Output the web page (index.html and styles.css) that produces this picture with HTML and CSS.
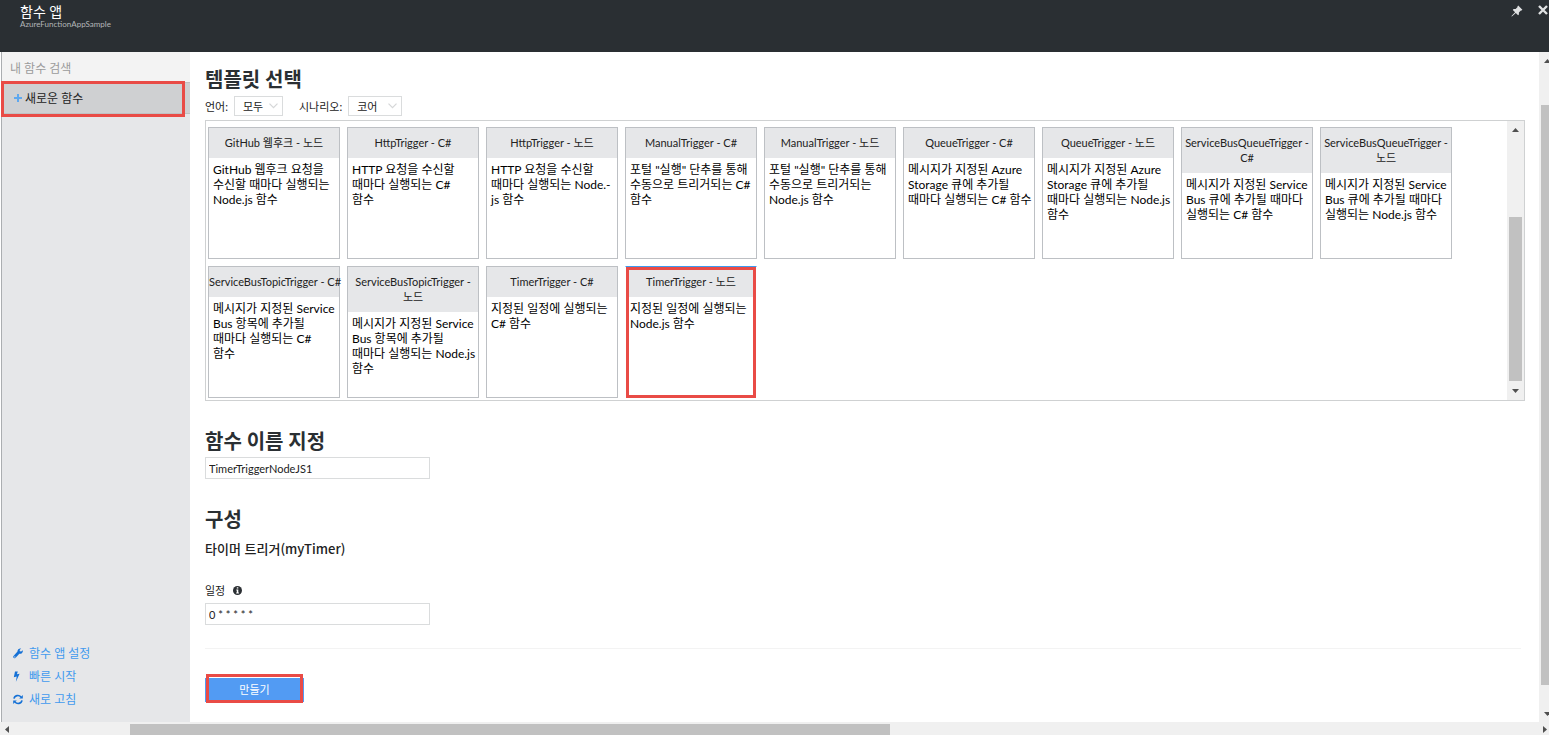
FILE: index.html
```html
<!DOCTYPE html>
<html lang="ko">
<head>
<meta charset="utf-8">
<title>함수 앱</title>
<link rel="stylesheet" href="styles.css">
</head>
<body>
<div class="page">
  <header class="topbar">
    <div class="titles">
      <h1 class="title">함수 앱</h1>
      <p class="subtitle">AzureFunctionAppSample</p>
    </div>
    <div class="actions">
      <button class="icon-button" aria-label="고정"><svg width="12" height="12" viewBox="0 0 12 12"><path fill="#dfe1e2" d="M7.2.6 11.4 4.8 10.6 5.6 9.9 5.4 7.9 7.4 7.9 9.4 7.1 10.2 4.8 7.9 1.2 11.3.4 11.6.7 10.8 4.1 7.2 1.8 4.9 2.6 4.1 4.6 4.1 6.6 2.1 6.4 1.4z"/></svg></button>
      <button class="icon-button" aria-label="닫기"><svg width="10" height="10" viewBox="0 0 10 10"><path stroke="#dfe1e2" stroke-width="2.4" d="M1 1 9 9M9 1 1 9"/></svg></button>
    </div>
  </header>
  <div class="body">
    <aside class="sidebar">
      <input class="search" type="text" placeholder="내 함수 검색" aria-label="내 함수 검색">
      <button class="new-function"><svg width="8" height="8" viewBox="0 0 8 8"><path stroke="#5fa8ee" stroke-width="2" d="M4 0V8M0 4H8"/></svg><span>새로운 함수</span></button>
      <nav class="links">
        <a href="#"><svg width="10" height="11" viewBox="0 0 10 11"><path fill="#1571d6" d="M9.8 2.3 8.2 3.6 6.9 3.2 6.6 2 8.2.6C6.300 0 4.300 1.400 4.500 3.600L.5 7.900C-.5 9.300 1 11 2.400 9.900L6.300 5.800C8.600 6.200 10.200 4.300 9.800 2.300ZM1.500 8.500a.6.6 0 1 1 .1 1.100.6.6 0 0 1-.1-1.100Z"/></svg><span>함수 앱 설정</span></a>
        <a href="#"><svg width="10" height="11" viewBox="0 0 10 11"><path fill="#1571d6" d="M2 .5H4.800L3.900 3.300 6.600 2.700 2.900 10.700 3.700 5.500.8 6.200Z"/></svg><span>빠른 시작</span></a>
        <a href="#"><svg width="10" height="11" viewBox="0 0 10 11"><path fill="none" stroke="#1571d6" stroke-width="1.600" d="M1 4.600C1.600 1.200 6 .6 8 3M9 6.400C8.400 9.800 4 10.400 2 8"/><path fill="#1571d6" d="M9.800.9V4.500H6.200ZM.2 10.100V6.500H3.800Z"/></svg><span>새로 고침</span></a>
      </nav>
      <span class="mark mark-new"></span>
    </aside>
    <main class="content">
      <h2 class="heading">템플릿 선택</h2>
      <div class="filters">
        <label for="lang">언어:</label>
        <span class="select-wrap"><select id="lang" class="select lang"><option>모두</option></select><svg class="chevron" width="9" height="6" viewBox="0 0 9 6"><path fill="none" stroke="#d5d7d8" stroke-width="1.200" d="M.5.7 4.500 4.700 8.500.7"/></svg></span>
        <label class="scenario-label" for="scenario">시나리오:</label>
        <span class="select-wrap"><select id="scenario" class="select scenario"><option>코어</option></select><svg class="chevron" width="9" height="6" viewBox="0 0 9 6"><path fill="none" stroke="#d5d7d8" stroke-width="1.200" d="M.5.7 4.500 4.700 8.500.7"/></svg></span>
      </div>
      <section class="templates">
        <div class="grid">
          <button class="card"><span class="name">GitHub 웹후크 - 노드</span><span class="desc">GitHub 웹후크 요청을<br>수신할 때마다 실행되는<br>Node.js 함수</span></button>
          <button class="card"><span class="name">HttpTrigger - C#</span><span class="desc">HTTP 요청을 수신할<br>때마다 실행되는 C#<br>함수</span></button>
          <button class="card"><span class="name">HttpTrigger - 노드</span><span class="desc">HTTP 요청을 수신할<br>때마다 실행되는 Node.-<br>js 함수</span></button>
          <button class="card"><span class="name">ManualTrigger - C#</span><span class="desc">포털 "실행" 단추를 통해<br>수동으로 트리거되는 C#<br>함수</span></button>
          <button class="card"><span class="name">ManualTrigger - 노드</span><span class="desc">포털 "실행" 단추를 통해<br>수동으로 트리거되는<br>Node.js 함수</span></button>
          <button class="card"><span class="name">QueueTrigger - C#</span><span class="desc">메시지가 지정된 Azure<br>Storage 큐에 추가될<br>때마다 실행되는 C# 함수</span></button>
          <button class="card"><span class="name">QueueTrigger - 노드</span><span class="desc">메시지가 지정된 Azure<br>Storage 큐에 추가될<br>때마다 실행되는 Node.js<br>함수</span></button>
          <button class="card"><span class="name">ServiceBusQueueTrigger -<br>C#</span><span class="desc">메시지가 지정된 Service<br>Bus 큐에 추가될 때마다<br>실행되는 C# 함수</span></button>
          <button class="card"><span class="name">ServiceBusQueueTrigger -<br>노드</span><span class="desc">메시지가 지정된 Service<br>Bus 큐에 추가될 때마다<br>실행되는 Node.js 함수</span></button>
          <button class="card"><span class="name">ServiceBusTopicTrigger - C#</span><span class="desc">메시지가 지정된 Service<br>Bus 항목에 추가될<br>때마다 실행되는 C#<br>함수</span></button>
          <button class="card"><span class="name">ServiceBusTopicTrigger -<br>노드</span><span class="desc">메시지가 지정된 Service<br>Bus 항목에 추가될<br>때마다 실행되는 Node.js<br>함수</span></button>
          <button class="card"><span class="name">TimerTrigger - C#</span><span class="desc">지정된 일정에 실행되는<br>C# 함수</span></button>
          <button class="card selected"><span class="name">TimerTrigger - 노드</span><span class="desc">지정된 일정에 실행되는<br>Node.js 함수</span><span class="mark mark-card"></span></button>
        </div>
        <div class="list-scroll"><i class="arrow up"></i><i class="list-thumb"></i><i class="arrow down"></i></div>
      </section>
      <h2 class="heading"><label for="fname">함수 이름 지정</label></h2>
      <input id="fname" class="field" type="text" value="TimerTriggerNodeJS1">
      <h2 class="heading config">구성</h2>
      <h3 class="subheading">타이머 트리거(myTimer)</h3>
      <div class="field-label"><label for="schedule">일정</label><svg width="9" height="9" viewBox="0 0 9 9"><circle cx="4.500" cy="4.500" r="4.500" fill="#2b2f33"/><path fill="#fff" d="M3.800 1.300H5.300V2.600H3.800ZM3.300 3.500H5.300V6.600H5.900V7.500H3.200V6.600H3.800V4.400H3.300Z"/></svg></div>
      <input id="schedule" class="field" type="text" value="0 * * * * *">
      <hr class="rule">
      <div class="create-wrap"><button class="create">만들기</button><span class="mark mark-create"></span></div>
    </main>
    <div class="page-scroll"><i class="arrow up"></i><i class="page-thumb"></i><i class="arrow down"></i></div>
  </div>
  <div class="bottom-scroll"><i class="arrow left"></i><i class="bottom-track"><i class="bottom-thumb"></i></i><i class="arrow right"></i></div>
</div>
</body>
</html>
```
FILE: styles.css
```css
* { box-sizing: border-box; }
body {
  margin: 0;
  font: 11px/15px Lato, "Noto Sans CJK KR", sans-serif;
  color: #222;
  background: #fff;
}
button, input, select { font: inherit; color: inherit; border-radius: 0; margin: 0; }
h1, h2, h3, p { margin: 0; font-weight: 400; }
i { display: block; }

.page { min-height: 100vh; display: flex; flex-direction: column; overflow: hidden; }
.topbar {
  height: 52px;
  padding-left: 20px;
  display: flex;
  justify-content: space-between;
  background: #2a2f33;
  color: #fff;
}
.title { font-size: 14px; line-height: 20px; padding-top: 2px; }
.subtitle { font-size: 8px; line-height: 8px; color: #b3b6b8; margin-top: -2px; }
.actions { display: flex; align-items: flex-start; gap: 15px; padding: 5px 1px 0 0; }
.icon-button { display: flex; padding: 0; border: 0; background: none; }

.body { flex: 1; display: flex; }
.sidebar {
  position: relative;
  width: 189px;
  margin-left: 1px;
  flex: none;
  display: flex;
  flex-direction: column;
  background: #e6e7e9;
  border-left: 1px solid #abaeb1;
}
.search {
  height: 30px;
  padding: 2px 8px 0;
  border: 0;
  background: #f3f3f3;
  font-size: 12px;
}
.search::placeholder { color: #9b9b9b; opacity: 1; }
.new-function {
  height: 32px;
  padding: 0 12px;
  border: 0;
  border-top: 1px solid #c0c1c3;
  border-bottom: 1px solid #c0c1c3;
  display: flex;
  align-items: center;
  gap: 3px;
  background: #cfd0d2;
  font-size: 12px;
}
.links {
  margin-top: auto;
  padding: 0 11px 11px;
  display: grid;
  font-size: 12px;
  line-height: 23px;
}
.links a { display: flex; align-items: center; gap: 6px; color: #429aee; text-decoration: none; }

.mark { position: absolute; border: 3px solid #e94b46; pointer-events: none; }
.mark-new { left: -1px; right: 5px; top: 29px; height: 36px; }
.mark-card { inset: 0 0 -1px; }
.mark-create { inset: -4px 1px -1px; }

.content { flex: 1; min-width: 0; padding: 15px 14px 19px 15px; }
.heading { font-size: 20px; line-height: 24px; font-weight: 700; color: #2a2f33; }
.filters { display: flex; align-items: center; margin: 5px 0 4px; }
.select-wrap { position: relative; display: flex; margin-left: 6px; }
.select {
  appearance: none;
  height: 20px;
  padding: 0 8px;
  border: 1px solid #dadcdd;
  background: #fff;
}
.lang { width: 49px; }
.scenario { width: 54px; }
.scenario-label { margin-left: 16px; }
.chevron { position: absolute; right: 5px; top: 7px; pointer-events: none; }

.templates { display: flex; height: 281px; border: 1px solid #cfd1d2; }
.grid {
  flex: 1;
  padding: 6px 0 0 2px;
  display: grid;
  grid-template-columns: repeat(auto-fill, 132px);
  grid-auto-rows: 132px;
  align-content: start;
  gap: 7px;
}
.card {
  position: relative;
  padding: 0;
  border: 1px solid #bdc0c4;
  background: #fff;
  color: #000;
  display: flex;
  flex-direction: column;
  justify-content: flex-start;
  text-align: left;
}
.name {
  width: 100%;
  padding: 7px 0 8px;
  background: #e6e7e9;
  color: #222;
  text-align: center;
  white-space: nowrap;
}
.desc { padding: 4px; font-size: 12px; white-space: nowrap; }
.selected { border-color: #fff; border-top-color: #3c9bf0; }

.list-scroll, .page-scroll { flex: none; display: flex; flex-direction: column; background: #f0f0f0; }
.list-scroll { width: 17px; align-items: center; padding: 7px 0; }
.list-thumb { width: 13px; height: 164px; margin: auto 0 8px; background: #c1c1c1; }
.page-scroll { width: 10px; padding: 7px 0 6px 5px; }
.page-thumb { flex: 1; margin: 42px 0 27px -3px; background: #c1c1c1; }
.arrow { flex: none; width: 7px; height: 4px; background: #505050; }
.up { clip-path: polygon(50% 0, 100% 100%, 0 100%); }
.down { clip-path: polygon(0 0, 100% 0, 50% 100%); }
.left, .right { width: 4px; height: 7px; }
.left { clip-path: polygon(100% 0, 100% 100%, 0 50%); }
.right { clip-path: polygon(0 0, 100% 50%, 0 100%); }
.bottom-scroll { height: 13px; display: flex; align-items: center; padding: 2px 2px 0 5px; background: #f0f0f0; }
.bottom-track { flex: 1; padding: 0 6px 0 121px; }
.bottom-thumb { width: 54%; height: 11px; background: #c1c1c1; }

.templates + .heading { margin-top: 28px; }
.field {
  display: block;
  width: 225px;
  height: 22px;
  padding: 0 3px;
  border: 1px solid #dadcdd;
  background: #fff;
}
.heading + .field { margin-top: 4px; }
.config { margin-top: 28px; }
.subheading { font: 500 13px/16px "Noto Sans CJK KR", sans-serif; margin-top: 10px; }
.field-label { display: flex; align-items: center; gap: 8px; margin: 26px 0 5px; }
.rule { margin: 23px 4px 29px 0; border: 0; border-top: 1px solid #f3f3f3; }
.create-wrap { position: relative; width: 99px; }
.create {
  display: block;
  width: 100%;
  height: 24px;
  padding: 0 0 2px;
  border: 0;
  background: #529bf3;
  color: #fff;
}
```
